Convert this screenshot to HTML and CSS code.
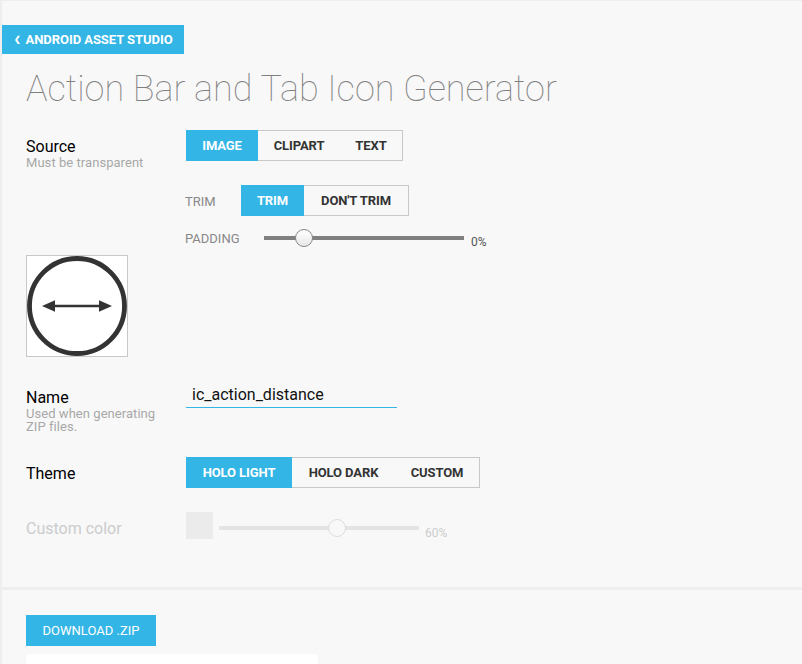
FILE: index.html
```html
<!DOCTYPE html>
<html lang="en">
<head>
<meta charset="utf-8">
<title>Action Bar and Tab Icon Generator</title>
<link rel="stylesheet" href="styles.css">
</head>
<body>
<main class="page">
  <section class="panel panel-form">
    <a class="back" href="#"><span class="chev">&#10094;</span>ANDROID ASSET STUDIO</a>
    <h1 class="title">Action Bar and Tab Icon Generator</h1>

    <div class="row row-source">
      <div class="label"><div class="name">Source</div><div class="help">Must be transparent</div></div>
      <div class="control">
        <div class="seg"><span class="opt on opt-image">IMAGE</span><span class="opt opt-clipart">CLIPART</span><span class="opt opt-text">TEXT</span></div>
      </div>
    </div>

    <div class="sub sub-trim">
      <span class="sub-label">TRIM</span>
      <div class="seg"><span class="opt on opt-trim">TRIM</span><span class="opt opt-donttrim">DON'T TRIM</span></div>
    </div>
    <div class="sub sub-padding">
      <span class="sub-label">PADDING</span>
      <div class="slider slider-padding"><span class="thumb"></span></div>
      <span class="val">0%</span>
    </div>

    <div class="preview">
      <svg width="100" height="100" viewBox="0 0 100 100">
        <circle cx="50" cy="50" r="47.5" fill="none" stroke="#333" stroke-width="4.8"/>
        <path d="M20 50H80" stroke="#333" stroke-width="2.6" fill="none"/>
        <path d="M15 50L28 44.2V55.8ZM85 50L72 44.2V55.8Z" fill="#333"/>
      </svg>
    </div>

    <div class="row row-name">
      <div class="label"><div class="name">Name</div><div class="help">Used when generating<br>ZIP files.</div></div>
      <div class="control"><div class="input">ic_action_distance</div></div>
    </div>

    <div class="row row-theme">
      <div class="label"><div class="name">Theme</div></div>
      <div class="control">
        <div class="seg"><span class="opt on opt-light">HOLO LIGHT</span><span class="opt opt-dark">HOLO DARK</span><span class="opt opt-custom">CUSTOM</span></div>
      </div>
    </div>

    <div class="row row-color">
      <div class="label"><div class="name">Custom color</div></div>
      <div class="control color-control">
        <span class="swatch"></span>
        <div class="slider slider-color"><span class="thumb"></span></div>
        <span class="val">60%</span>
      </div>
    </div>
  </section>

  <section class="panel panel-out">
    <a class="download" href="#">DOWNLOAD .ZIP</a>
    <div class="card"></div>
  </section>
</main>
</body>
</html>
```
FILE: styles.css
```css
* { box-sizing: border-box; }
html, body { margin: 0; height: 100%; overflow: hidden; }
body { background: #eeeeee; font-family: Roboto, sans-serif; color: #000; }
.page { padding: 1px 0 0 2px; display: flex; flex-direction: column; gap: 3px; height: 664px; overflow: hidden; }
.panel { background: #f8f8f8; flex: none; }
.panel-form { height: 586px; padding-top: 24px; }
.back {
  display: flex; align-items: center; width: 182px; height: 29px; padding-left: 12px;
  background: #33b5e5; color: #fff; font-size: 13px; font-weight: 700; letter-spacing: -0.05px; text-decoration: none; white-space: nowrap;
}
.chev { font-size: 8px; width: 11.5px; font-weight: 700; }
.title {
  margin: 0 0 0 24px; height: 76px; line-height: 70px; font-size: 36px; font-weight: 100; color: #808080; white-space: nowrap;
}
.row { display: flex; padding-left: 24px; }
.label { width: 160px; flex: none; }
.name { font-size: 16px; line-height: 19px; color: #000; }
.help { font-size: 13px; line-height: 13px; color: #a8a8a8; letter-spacing: 0.05px; }
.seg { display: inline-flex; height: 31px; border: 1px solid #c8c8c8; border-left: 0; background: #f8f8f8; }
.opt { display: flex; align-items: center; justify-content: center; font-size: 13px; font-weight: 700; color: #333; letter-spacing: -0.1px; }
.opt.on { background: #33b5e5; color: #fff; margin: -1px 0; }
.opt-image { width: 72px; }
.opt-clipart { width: 82px; }
.opt-text { width: 62px; }
.opt-trim { width: 63px; }
.opt-donttrim { width: 104px; }
.opt-light { width: 106px; }
.opt-dark { width: 103px; }
.opt-custom { width: 84px; }
.row-source { height: 55px; }
.row-source .label { padding-top: 7px; }
.sub { display: flex; align-items: center; margin-left: 184px; }
.sub-label { font-size: 13px; color: #888; margin-left: -1px; }
.sub-trim { height: 31px; }
.sub-trim .sub-label { width: 56px; padding-top: 2px; }
.sub-padding { height: 30px; margin-top: 7px; }
.sub-padding .sub-label { width: 79px; }
.slider { position: relative; width: 200px; height: 4px; background: #808080; }
.thumb {
  position: absolute; top: -7px; width: 18px; height: 18px; border-radius: 50%;
  background: linear-gradient(#fff, #e8e8e8); border: 1px solid #888;
}
.slider-padding .thumb { left: 31px; }
.val { font-size: 12px; color: #555; margin: 8px 0 0 7px; }
.preview { margin: 2px 0 0 24px; width: 102px; height: 102px; border: 1px solid #c8c8c8; background: #fff; }
.preview svg { display: block; }
.row-name { margin-top: 31px; height: 69px; }
.input {
  width: 211px; height: 23px; margin-top: -3px; padding-left: 6px; font-size: 16px; line-height: 20px; color: #111;
  border-bottom: 1px solid #33b5e5;
}
.row-theme { height: 55px; }
.row-theme .label { padding-top: 7px; }
.row-color { height: 31px; }
.row-color .name { color: #ccc; padding-top: 7px; }
.color-control { display: flex; align-items: flex-start; }
.swatch { width: 27px; height: 27px; background: #ebebeb; }
.slider-color { margin: 14px 0 0 6px; background: #e4e4e4; }
.slider-color .thumb { left: 109px; background: #f8f8f8; border-color: #ddd; }
.row-color .val { color: #ccc; margin: 14px 0 0 6px; }
.panel-out { flex: 1; padding: 25px 0 0 24px; }
.download {
  display: flex; align-items: center; justify-content: center; width: 130px; height: 31px;
  background: #33b5e5; color: #fff; font-size: 13px; font-weight: 400; text-decoration: none;
}
.card { width: 292px; height: 40px; margin-top: 8px; background: #fff; border-radius: 3px; }
```
